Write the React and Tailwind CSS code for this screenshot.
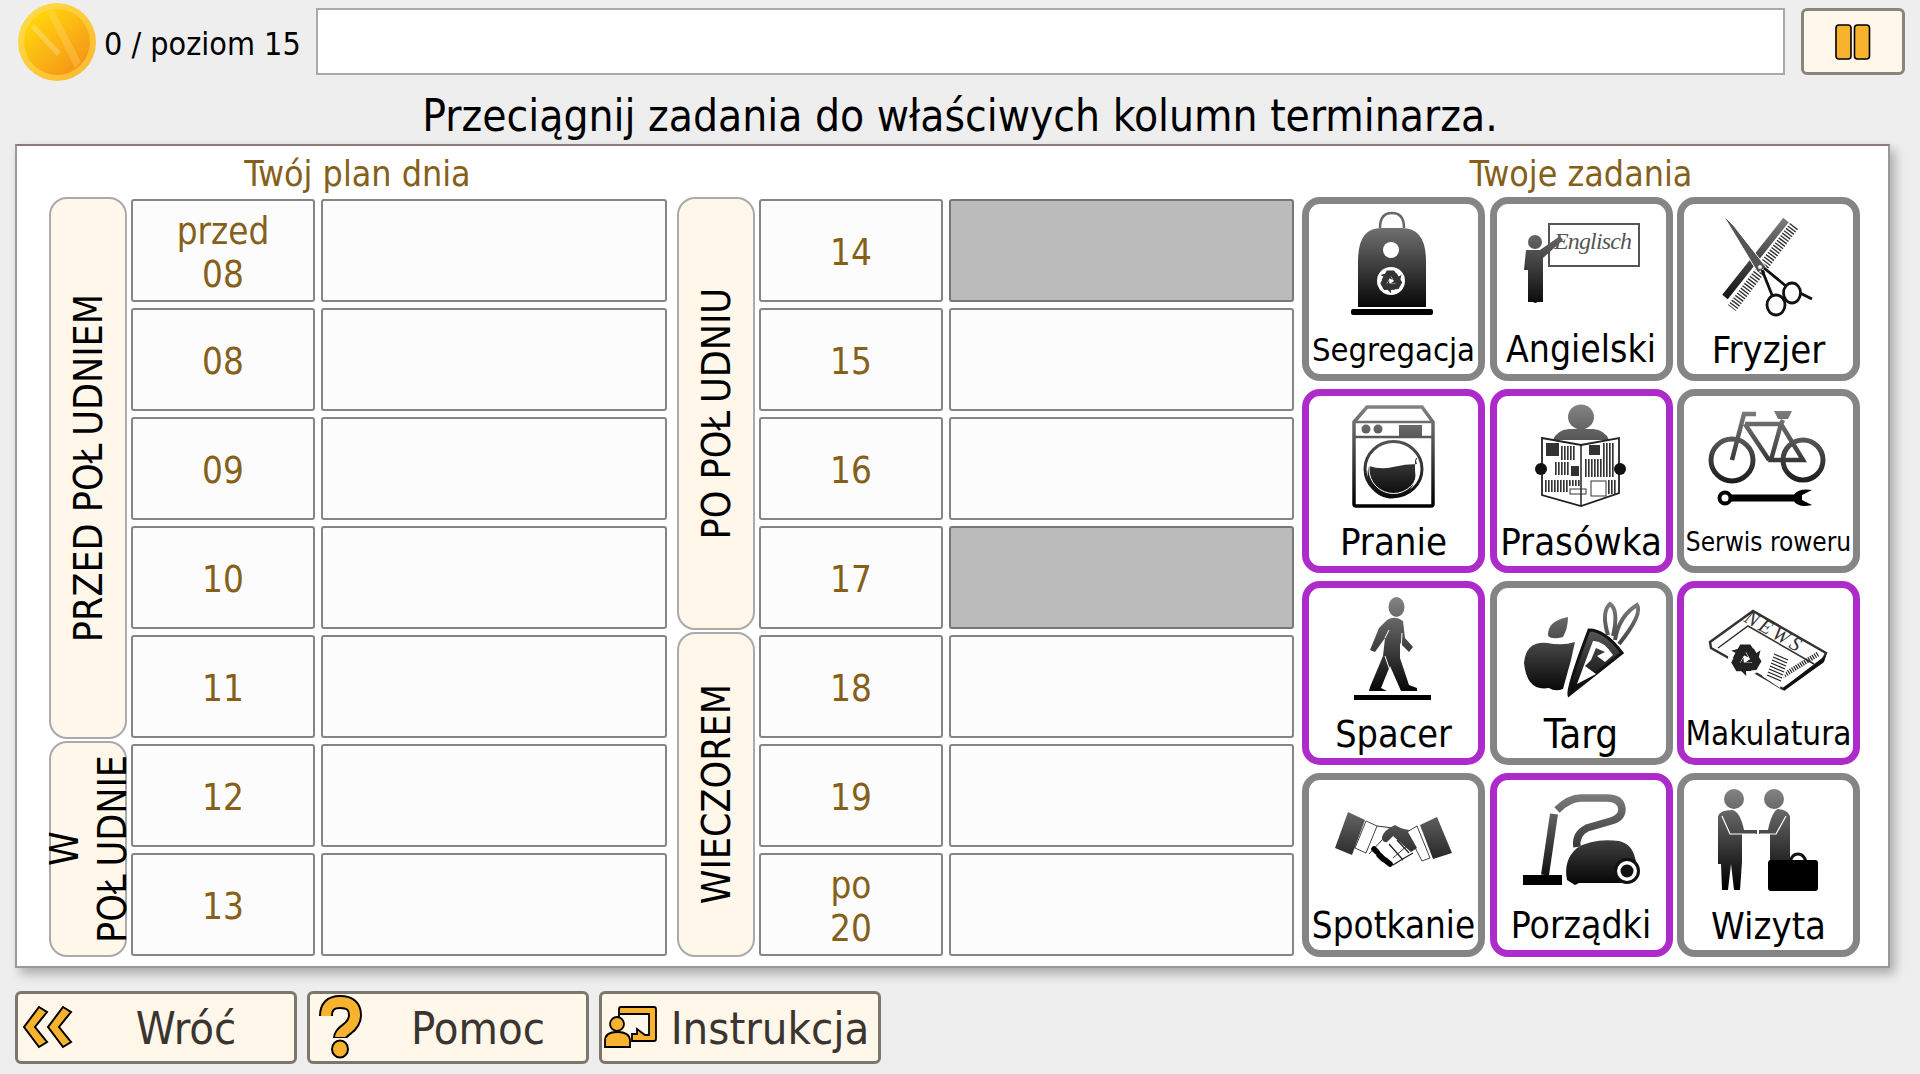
import React from "react";

const font = "font-['DejaVu_Sans_Condensed','DejaVu_Sans',sans-serif]";

// shared gray-to-black paint of the pictograms
const Ico = ({ children }) => (
  <svg viewBox="0 0 169 125" className="block w-[169px] h-[125px] shrink-0">
    <defs>
      <linearGradient id="ink" gradientUnits="userSpaceOnUse" x1="0" y1="8" x2="0" y2="108">
        <stop offset="0" stopColor="#858585" />
        <stop offset="1" stopColor="#000" />
      </linearGradient>
    </defs>
    {children}
  </svg>
);

const Recycle = ({ x, y, s = 1, fill = "#333" }) => (
  <g transform={`translate(${x} ${y}) scale(${s})`} fill={fill}>
    {[0, 120, 240].map((r) => (
      <path key={r} transform={`rotate(${r})`} d="M-4 -10 L3 -10 L7 -4 L10 -6 L8 2 L0 2 L3 0 L0 -5 L-4 2 L-9 -1 Z" />
    ))}
  </g>
);

const Segregacja = () => (
  <Ico>
    <path d="M71 24 Q71 9 83 9 Q95 9 95 24" fill="none" stroke="#666" strokeWidth="2.5" />
    <path d="M49 103 V57 Q49 24 72 24 H93 Q117 24 117 57 V103 Z" fill="url(#ink)" />
    <circle cx="82" cy="46" r="8" fill="#fff" />
    <circle cx="82" cy="77" r="14" fill="#fff" />
    <Recycle x={82} y={77} s={1.05} />
    <rect x="42" y="105" width="82" height="6" rx="2" fill="#000" />
  </Ico>
);

const Angielski = () => (
  <Ico>
    <rect x="52" y="20" width="90" height="42" fill="#fff" stroke="#555" strokeWidth="2" />
    <text x="57" y="45" fontFamily="'Liberation Serif',serif" fontStyle="italic" fontSize="24" fill="#555" textLength="78">
      Englisch
    </text>
    <circle cx="38" cy="38" r="7" fill="url(#ink)" />
    <path d="M29 46 H43 L63 32 L66 36 L46 54 V98 H41 L38 99 L36 98 H31 V66 H27 Z" fill="url(#ink)" />
  </Ico>
);

const Fryzjer = () => (
  <Ico>
    <path d="M102 16 L41 93" stroke="url(#ink)" strokeWidth="7" fill="none" />
    <path d="M110 22 L48 104" stroke="#333" strokeWidth="10" strokeDasharray="1.4 1.6" fill="none" />
    <path d="M39 11 L50 22 L82 63 L74 69 Z" fill="#555" stroke="#fff" strokeWidth="1" />
    <circle cx="76" cy="63" r="2" fill="#eee" />
    <path d="M78 66 L88 91 M80 64 L102 82 L128 95" fill="none" stroke="#111" strokeWidth="2.8" />
    <ellipse cx="92" cy="101" rx="9" ry="10" fill="#fff" stroke="#111" strokeWidth="2.8" />
    <ellipse cx="108" cy="89" rx="8.5" ry="10" fill="#fff" stroke="#111" strokeWidth="2.8" />
  </Ico>
);

const Pranie = () => (
  <Ico>
    <g fill="none" stroke="url(#ink)" strokeWidth="3.5">
      <path d="M45 26 L58 11 H113 L124 26 V108 Q124 110 122 110 H47 Q45 110 45 108 Z" />
      <path d="M45 26 H124 M45 41 H124" strokeWidth="2.5" />
      <ellipse cx="84.5" cy="73" rx="28.5" ry="27.5" strokeWidth="3" />
    </g>
    <circle cx="57" cy="33" r="4.5" fill="url(#ink)" />
    <circle cx="69" cy="33" r="4.5" fill="url(#ink)" />
    <rect x="90" y="29" width="23" height="12" fill="url(#ink)" />
    <path d="M60 70 Q72 74 84 71 T108 68 V62 H106 V74 A24 24 0 1 1 60 70 Z" fill="url(#ink)" />
    <circle cx="84.5" cy="73" r="24.5" fill="none" stroke="#fff" strokeWidth="1" />
  </Ico>
);

const stripes = (x0, y0, n, h, step = 3) =>
  Array.from({ length: n }, (_, i) => (
    <rect key={i} x={x0 + i * step} y={y0} width={step * 0.55} height={h} fill="#333" />
  ));

const Prasowka = () => (
  <Ico>
    <ellipse cx="84" cy="21" rx="13" ry="12.5" fill="url(#ink)" />
    <path d="M56 44 Q60 34 72 33 H96 Q108 34 112 44 Z" fill="url(#ink)" />
    <path d="M45 42 L84 49 L122 42 V97 L84 110 L45 99 Z" fill="#fff" stroke="#222" strokeWidth="1.8" />
    <path d="M84 49 V110" stroke="#222" strokeWidth="1.5" />
    <rect x="49" y="47" width="13" height="13" fill="#333" />
    <rect x="92" y="49" width="11" height="10" fill="#333" />
    <rect x="74" y="70" width="8" height="10" fill="#333" />
    {stripes(64, 50, 5, 14)}
    {stripes(106, 47, 4, 16)}
    {stripes(58, 66, 5, 13)}
    {stripes(88, 63, 10, 18)}
    {stripes(48, 84, 8, 12)}
    {stripes(72, 84, 4, 6)}
    <rect x="73" y="93" width="16" height="5" fill="none" stroke="#333" />
    <rect x="94" y="85" width="15" height="15" fill="#fff" stroke="#333" />
    {stripes(111, 84, 3, 14)}
    <circle cx="44" cy="73" r="6" fill="#111" />
    <circle cx="123" cy="73" r="6" fill="#111" />
  </Ico>
);

const Serwis = () => (
  <Ico>
    <g fill="none" stroke="url(#ink)" strokeWidth="5">
      <circle cx="48" cy="64" r="21" />
      <circle cx="119" cy="64" r="20" />
      <path d="M48 64 L60 18 H72 M61 28 H97 L87 64 H119 L97 28 M61 28 L85 64 M99 24 L97 28" strokeWidth="4.5" />
    </g>
    <path d="M90 15 H108 L104 23 H94 Z" fill="url(#ink)" />
    <circle cx="41" cy="102" r="5.5" fill="#fff" stroke="#000" strokeWidth="4" />
    <path d="M46 98.5 H110 Q115 92 128 94 L118 99 L118 104 L128 109 Q115 112 110 105.5 H46 Z" fill="#000" />
  </Ico>
);

const Spacer = () => (
  <Ico>
    <ellipse cx="87.5" cy="19" rx="8" ry="10" fill="url(#ink)" />
    <path d="M78 32 Q86 27 94 33 L96 50 L104 59 L100 64 L91 55 L91 70 L100 97 L108 100 L108 103 L92 103 L81 78 L72 100 L78 103 L60 103 L61 99 L74 68 L76 50 L66 64 L61 62 L70 40 Z" fill="url(#ink)" />
    <path d="M76 50 L80 42 M93 45 L92 62 M76 68 L88 103" stroke="#fff" strokeWidth="1" fill="none" />
    <rect x="45" y="107" width="77" height="5" fill="#000" />
  </Ico>
);

const Targ = () => (
  <Ico>
    <path d="M50 55 Q66 58 78 54 L74 72 L66 101 Q58 104 52 100 Q30 104 27 75 Q29 53 50 55 Z" fill="url(#ink)" />
    <path d="M71 29 Q50 33 51 48 Q55 52 66 49 Q71 40 71 29 Z" fill="url(#ink)" />
    <path d="M92 42 Q108 42 125 65 L72 107 Q70 100 92 42 Z" fill="url(#ink)" stroke="#111" strokeWidth="3" />
    <path d="M96 53 Q106 52 116 67 L108 74 L100 68 L108 64 L99 60 L94 72 L88 78 L99 86 L80 96 Z" fill="#fff" />
    <path d="M111 47 Q104 24 113 16 Q122 22 116 48 M118 52 Q122 28 140 17 Q146 26 122 56" fill="none" stroke="url(#ink)" strokeWidth="4" />
  </Ico>
);

const Makulatura = () => (
  <Ico>
    <path d="M26 54 L69 23 L142 65 L138 74 L99 101 L84 92 L27 60 Z" fill="#fff" stroke="#333" strokeWidth="2.5" />
    <path d="M34 60 L64 38 L130 76" fill="none" stroke="#333" strokeWidth="1.5" />
    <path d="M99 100 L142 67 L140 74 L100 103 Z" fill="#111" />
    <path d="M92 92 L134 66" stroke="#222" strokeWidth="5" strokeDasharray="1.2 1.2" fill="none" />
    <path d="M88 65 L106 72 L96 100 L78 88 Z" fill="#fff" />
    {[0, 1, 2, 3, 4, 5, 6, 7].map((i) => (
      <path key={i} d={`M${90 - i} ${66 + i * 3} L${104 - i} ${72 + i * 3}`} stroke="#222" strokeWidth="1.2" />
    ))}
    <text x="0" y="0" transform="translate(59 33) rotate(30)" fontFamily="'Liberation Serif',serif" fontStyle="italic" fontSize="20" fill="#333" textLength="62">
      NEWS
    </text>
    <circle cx="62" cy="70" r="18" fill="#fff" />
    <Recycle x={62} y={71} s={1.45} fill="#222" />
  </Ico>
);

const Spotkanie = () => (
  <Ico>
    <path d="M39 32 L56 40 L43 75 L26 68 Z" fill="url(#ink)" />
    <path d="M128 37 L143 73 L124 79 L111 45 Z" fill="url(#ink)" />
    <path d="M57 41 L68 46 L57 73 L46 68 Z" fill="#fff" stroke="#444" />
    <path d="M108 46 L121 78 L113 81 L98 52 Z" fill="#fff" stroke="#444" />
    <path d="M68 46 L84 48 L60 74 M84 78 L100 64" fill="none" stroke="#333" strokeWidth="1" />
    <path d="M70 72 L84 85 L92 80 L104 73 M80 64 L94 80 M88 60 L100 73" fill="none" stroke="#222" strokeWidth="1.2" />
    <path d="M100 50 Q92 49 86 45 Q75 50 73 57 Q73 63 78 62 L84 56 L102 72 L108 68 L99 52 Z" fill="url(#ink)" />
    <path d="M65 69 L68 72 M70 75 L74 79 M76 80 L81 84" stroke="#000" strokeWidth="5.5" strokeLinecap="round" />
  </Ico>
);

const Porzadki = () => (
  <Ico>
    <rect x="26" y="95" width="39" height="10" fill="#000" />
    <path d="M48 95 L57 34" stroke="url(#ink)" strokeWidth="8" fill="none" />
    <path d="M60 30 Q72 18 84 18 H110 Q124 18 125 29 Q125 38 114 41 L90 48 Q78 54 80 67" stroke="url(#ink)" strokeWidth="7.5" fill="none" />
    <path d="M70 100 Q66 80 80 68 Q96 58 122 61 Q135 64 138 78 L142 90 L128 103 H82 L78 105 Z" fill="url(#ink)" />
    <circle cx="130" cy="91" r="13" fill="#111" />
    <circle cx="130" cy="91" r="10" fill="#fff" />
    <circle cx="130" cy="91" r="6.5" fill="#111" />
  </Ico>
);

const Wizyta = () => (
  <Ico>
    <circle cx="50" cy="19" r="10" fill="url(#ink)" />
    <circle cx="90" cy="19" r="10" fill="url(#ink)" />
    <path d="M34 36 Q36 30 48 30 Q56 31 60 50 H73 V54 H58 V82 L56 110 H50 L47 84 L44 110 H38 L37 84 H34 Z" fill="url(#ink)" />
    <path d="M106 36 Q104 30 94 29 Q88 31 84 50 H75 V54 H86 V100 H104 V84 H106 Z" fill="url(#ink)" />
    <path d="M38 36 L46 54 H72 M102 36 L92 54 H76" fill="none" stroke="#fff" strokeWidth="1.2" />
    <path d="M106 82 Q108 74 114 74 Q120 74 122 82" fill="none" stroke="#111" strokeWidth="3" />
    <rect x="84" y="80" width="50" height="31" rx="3" fill="#000" />
  </Ico>
);

const tasks = [
  { name: "Segregacja", Icon: Segregacja, text: "text-[32.5px]" },
  { name: "Angielski", Icon: Angielski, text: "text-[37px]" },
  { name: "Fryzjer", Icon: Fryzjer, text: "text-[38px]" },
  { name: "Pranie", Icon: Pranie, text: "text-[38px]", on: true },
  { name: "Prasówka", Icon: Prasowka, text: "text-[38px]", on: true },
  { name: "Serwis roweru", Icon: Serwis, text: "text-[26px]" },
  { name: "Spacer", Icon: Spacer, text: "text-[37.5px]", on: true },
  { name: "Targ", Icon: Targ, text: "text-[40px]" },
  { name: "Makulatura", Icon: Makulatura, text: "text-[33px]", on: true },
  { name: "Spotkanie", Icon: Spotkanie, text: "text-[36.5px]" },
  { name: "Porządki", Icon: Porzadki, text: "text-[37px]", on: true },
  { name: "Wizyta", Icon: Wizyta, text: "text-[38px]" },
];

const Task = ({ name, Icon, text, on }) => (
  <div className={`h-[184px] w-[183px] rounded-[18px] border-[7px] bg-white flex flex-col items-center overflow-hidden ${on ? "border-[#ae2bcb]" : "border-[#858585]"}`}>
    <Icon />
    <div className={`h-[45px] pt-[1px] leading-[40px] whitespace-nowrap text-black ${text}`}>{name}</div>
  </div>
);

const Slot = ({ hour, busy }) => (
  <div className="flex gap-[6px] h-[103px]">
    <div className="w-[184px] pt-[4px] rounded-[3px] border-2 border-[#858585] bg-[#fcfcfc] flex items-center justify-center text-center text-[36.5px] leading-[43px] text-[#85601a]">
      <div>{hour}</div>
    </div>
    <div className={`flex-1 rounded-[3px] border-2 ${busy ? "border-[#777] bg-[#bbbbbb]" : "border-[#858585] bg-[#fcfcfc]"}`} />
  </div>
);

const Band = ({ className, children }) => (
  <div className={`w-[78px] pl-[2px] rounded-[18px] border-2 border-[#aaa] bg-[#fff7ea] flex items-center justify-center ${className}`}>
    <div className="[writing-mode:vertical-rl] rotate-180 text-center text-[39px] leading-[48px] text-black whitespace-nowrap">{children}</div>
  </div>
);

const Pause = () => (
  <svg viewBox="0 0 36 36" className="w-[36px] h-[36px]">
    <rect x="1" y="1" width="15" height="34" rx="3" fill="#f7b32e" stroke="#000" strokeWidth="1.6" />
    <rect x="19.5" y="1" width="15" height="34" rx="3" fill="#f7b32e" stroke="#000" strokeWidth="1.6" />
  </svg>
);

const Coin = () => (
  <svg viewBox="0 0 80 80" className="w-[80px] h-[80px] shrink-0">
    <defs>
      <linearGradient id="coinRim" x1="0" y1="0" x2="1" y2="1">
        <stop offset="0" stopColor="#ffe04a" />
        <stop offset="1" stopColor="#fbb62c" />
      </linearGradient>
      <linearGradient id="coinFace" x1="0.15" y1="0.1" x2="0.85" y2="0.9">
        <stop offset="0" stopColor="#ffd60a" />
        <stop offset="0.55" stopColor="#fbb315" />
        <stop offset="1" stopColor="#f59514" />
      </linearGradient>
    </defs>
    <circle cx="40" cy="40" r="39" fill="url(#coinRim)" />
    <circle cx="40" cy="40" r="33" fill="url(#coinFace)" />
    <path d="M30 10 L37 8 L64 60 L58 66 Z" fill="#ffe88a" opacity="0.25" />
    <path d="M14 26 L17 22 L44 50 L40 54 Z" fill="#fff" opacity="0.22" />
  </svg>
);

const Footer = ({ icon, label }) => (
  <div className="w-[282px] h-[73px] rounded-[6px] border-[3px] border-[#7d766c] bg-[#fff7ea] flex items-center">
    <svg viewBox="3 3 60 67" className="w-[60px] h-[67px] shrink-0">{icon}</svg>
    <div className="flex-1 pt-[2px] text-center text-[45px] text-[#3a3530] leading-none">{label}</div>
  </div>
);

const chevron = "M24 16 L32 21 L20 36 L32 51 L24 56 L9 36 Z";

export default function App() {
  const morning = [["przed", "08"], ["08"], ["09"], ["10"], ["11"], ["12"], ["13"]];
  const evening = [["14"], ["15"], ["16"], ["17"], ["18"], ["19"], ["po", "20"]];

  return (
    <div className={`w-[1920px] h-[1074px] overflow-hidden bg-[#eeeeee] ${font}`}>
      {/* top bar */}
      <div className="h-[83px] pl-[17px] flex items-center">
        <Coin />
        <div className="ml-[7px] pt-[4px] w-[212px] text-[32px] text-black whitespace-nowrap">0 / poziom 15</div>
        <div className="w-[1469px] h-[67px] bg-white border-2 border-[#aaa]" />
        <div className="ml-[16px] w-[104px] h-[67px] rounded-[6px] border-[3px] border-[#8a857c] bg-[#fff7ea] flex items-center justify-center">
          <Pause />
        </div>
      </div>

      <div className="h-[61px] pt-[4px] flex items-center justify-center text-[43.9px] text-black">
        Przeciągnij zadania do właściwych kolumn terminarza.
      </div>

      {/* panel */}
      <div className="ml-[15px] w-[1875px] h-[824px] bg-white border-2 border-[#999] border-t-[#8a7a7a] shadow-[5px_6px_10px_rgba(0,0,0,0.28)] pl-[32px]">
        <div className="h-[51px] pt-[4px] flex items-center text-[35.5px] text-[#85601a]">
          <div className="w-[617px] text-center">Twój plan dnia</div>
          <div className="w-[636px]" />
          <div className="w-[558px] text-center">Twoje zadania</div>
        </div>
        <div className="flex">
          {/* before noon */}
          <div className="w-[618px] flex gap-[4px]">
            <div className="flex flex-col gap-[2px]">
              <Band className="h-[542px]">PRZED PO<span className="me-[8px]">Ł</span>UDNIEM</Band>
              <Band className="h-[216px]">W<br />PO<span className="me-[8px]">Ł</span>UDNIE</Band>
            </div>
            <div className="flex-1 pt-[2px] flex flex-col gap-[6px]">
              {morning.map((h, i) => (
                <Slot key={i} hour={h.map((t) => <div key={t}>{t}</div>)} />
              ))}
            </div>
          </div>
          {/* after noon */}
          <div className="ml-[10px] w-[617px] flex gap-[4px]">
            <div className="flex flex-col gap-[2px]">
              <Band className="h-[433px]">PO PO<span className="me-[8px]">Ł</span>UDNIU</Band>
              <Band className="h-[325px]">WIECZOREM</Band>
            </div>
            <div className="flex-1 pt-[2px] flex flex-col gap-[6px]">
              {evening.map((h, i) => (
                <Slot key={i} hour={h.map((t) => <div key={t}>{t}</div>)} busy={i === 0 || i === 3} />
              ))}
            </div>
          </div>
          {/* tasks */}
          <div className="ml-[8px] w-[558px] grid grid-cols-3 gap-x-[4.5px] gap-y-[8px]">
            {tasks.map((t) => (
              <Task key={t.name} {...t} />
            ))}
          </div>
        </div>
      </div>

      {/* footer buttons */}
      <div className="mt-[23px] ml-[15px] flex gap-[10px]">
        <Footer
          label="Wróć"
          icon={
            <g fill="#f7b32e" stroke="#000" strokeWidth="2">
              <path d={chevron} />
              <path d={chevron} transform="translate(24 0)" />
            </g>
          }
        />
        <Footer
          label="Pomoc"
          icon={
            <g fill="none">
              <path d="M19 25 Q19 11 33 11 Q48 11 48 24 Q48 32 40 38 Q33 43 33 47" stroke="#000" strokeWidth="14" />
              <path d="M19 25 Q19 11 33 11 Q48 11 48 24 Q48 32 40 38 Q33 43 33 46" stroke="#f7b32e" strokeWidth="10" />
              <ellipse cx="33" cy="58" rx="8" ry="8.5" fill="#f7b32e" stroke="#000" strokeWidth="2" />
            </g>
          }
        />
        <Footer
          label="Instrukcja"
          icon={
            <g stroke="#000" strokeWidth="1.8">
              <path d="M20 27 V18 Q20 16 22 16 H55 Q57 16 57 18 V48 Q57 50 55 50 H33 V43 H38 V38 L46 44 V44 H50 V23 H20 Z" fill="#f7b32e" />
              <circle cx="18" cy="33" r="7" fill="#f7b32e" />
              <path d="M6 56 V50 Q6 41 18 41 Q31 41 31 50 V56 Z" fill="#f7b32e" />
            </g>
          }
        />
      </div>
    </div>
  );
}
